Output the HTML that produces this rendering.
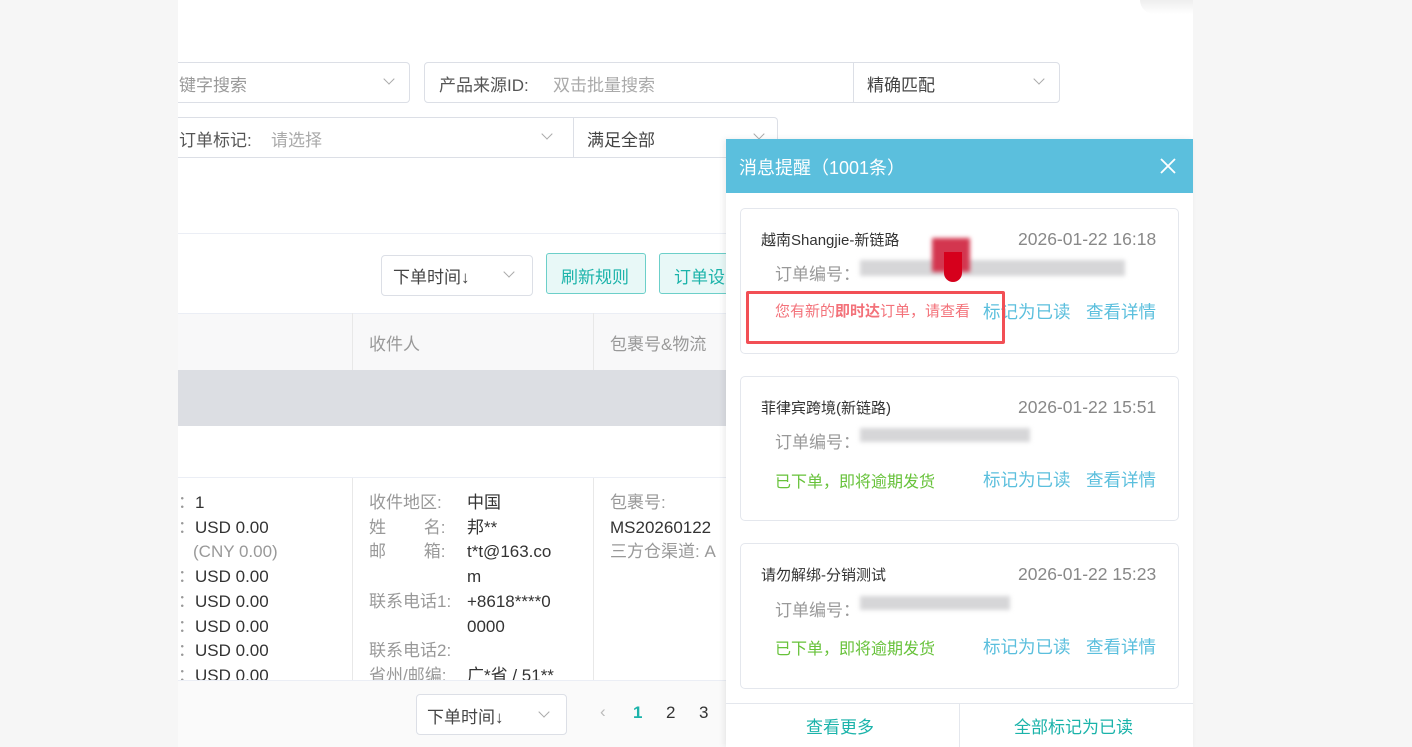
<!DOCTYPE html>
<html><head><meta charset="utf-8"><style>
*{margin:0;padding:0;box-sizing:border-box}
body{width:1412px;height:747px;background:#f6f6f6;position:relative;overflow:hidden;font-family:"Liberation Sans","Noto Sans CJK SC",sans-serif;font-size:16px;color:#333}
.a{position:absolute;white-space:nowrap}
.box{position:absolute;border:1px solid #dcdfe6;border-radius:4px;background:#fff}
.chev{position:absolute;width:8px;height:8px;border-right:1.3px solid #aaa;border-bottom:1.3px solid #aaa;transform:rotate(45deg)}
.g{color:#999}
.card{position:absolute;left:740px;width:439px;border:1px solid #e4e7ed;border-radius:5px;background:#fff}
.blue{color:#5bbfdd}
.green{color:#67c23a}
.blur{position:absolute;background:#d6d6d8;filter:blur(2px)}
.t{font-size:17px}
</style></head><body>
<div class="a" style="left:178px;top:0;width:1015px;height:747px;background:#fff"></div>
<div class="a" style="left:1140px;top:0;width:53px;height:14px;background:linear-gradient(#eee,#fff);border-radius:0 0 0 20px"></div>

<div class="box" style="left:178px;top:62px;width:232px;height:41px;border-left:none;border-radius:0 4px 4px 0"></div>
<div class="a g t" style="left:179px;top:71px">键字搜索</div>
<div class="chev" style="left:385px;top:75px"></div>
<div class="box" style="left:424px;top:62px;width:636px;height:41px"></div>
<div class="a t" style="left:439px;top:71px;color:#555">产品来源ID:</div>
<div class="a t" style="left:553px;top:71px;color:#aaa">双击批量搜索</div>
<div class="a" style="left:853px;top:63px;width:1px;height:39px;background:#dcdfe6"></div>
<div class="a t" style="left:867px;top:71px;color:#444">精确匹配</div>
<div class="chev" style="left:1035px;top:75px"></div>

<div class="a" style="left:178px;top:117px;width:600px;height:41px;border:1px solid #dcdfe6;border-left:none;border-radius:0 4px 4px 0"></div>
<div class="a t" style="left:179px;top:126px;color:#555">订单标记:</div>
<div class="a t" style="left:271px;top:126px;color:#aaa">请选择</div>
<div class="chev" style="left:543px;top:130px"></div>
<div class="a" style="left:573px;top:118px;width:1px;height:39px;background:#dcdfe6"></div>
<div class="a t" style="left:587px;top:126px;color:#444">满足全部</div>
<div class="chev" style="left:755px;top:130px"></div>

<div class="a" style="left:178px;top:233px;width:1015px;height:1px;background:#ebeef5"></div>
<div class="box" style="left:381px;top:255px;width:152px;height:41px"></div>
<div class="a t" style="left:393px;top:263px;color:#444">下单时间↓</div>
<div class="chev" style="left:505px;top:268px"></div>
<div class="a t" style="left:546px;top:253px;width:100px;height:41px;border:1px solid #6ccfc9;background:#e8f8f7;border-radius:3px;color:#1bb3aa;padding:9px 0 0 14px">刷新规则</div>
<div class="a t" style="left:659px;top:253px;width:100px;height:41px;border:1px solid #6ccfc9;background:#e8f8f7;border-radius:3px;color:#1bb3aa;padding:9px 0 0 14px">订单设置</div>

<div class="a" style="left:178px;top:313px;width:1015px;height:57px;background:#f8f8f9;border-top:1px solid #ebeef5"></div>
<div class="a" style="left:352px;top:313px;width:1px;height:57px;background:#e8e8e8"></div>
<div class="a" style="left:593px;top:313px;width:1px;height:57px;background:#e8e8e8"></div>
<div class="a g t" style="left:369px;top:330px">收件人</div>
<div class="a g t" style="left:610px;top:330px">包裹号&amp;物流</div>
<div class="a" style="left:178px;top:370px;width:1015px;height:56px;background:#dcdee3"></div>
<div class="a" style="left:178px;top:477px;width:1015px;height:1px;background:#ebeef5"></div>
<div class="a" style="left:352px;top:478px;width:1px;height:202px;background:#e8e8e8"></div>
<div class="a" style="left:593px;top:478px;width:1px;height:202px;background:#e8e8e8"></div>
<div class="a t" style="left:178px;top:491px;line-height:24.7px;color:#333">
<span class="g">：</span>1<br><span class="g">：</span>USD 0.00<br><span style="color:#999;padding-left:15px">(CNY 0.00)</span><br><span class="g">：</span>USD 0.00<br><span class="g">：</span>USD 0.00<br><span class="g">：</span>USD 0.00<br><span class="g">：</span>USD 0.00<br><span class="g">：</span>USD 0.00</div>
<div class="a t" style="left:369px;top:491px;line-height:24.7px;color:#999">收件地区:<br>姓&nbsp;&nbsp;&nbsp;&nbsp;&nbsp;&nbsp;&nbsp;&nbsp;名:<br>邮&nbsp;&nbsp;&nbsp;&nbsp;&nbsp;&nbsp;&nbsp;&nbsp;箱:<br><br>联系电话1:<br><br>联系电话2:<br>省州/邮编:</div>
<div class="a t" style="left:467px;top:491px;line-height:24.7px;color:#333">中国<br>邦**<br>t*t@163.co<br>m<br>+8618****0<br>0000<br><br>广*省 / 51**</div>
<div class="a t" style="left:610px;top:491px;line-height:24.7px;color:#999">包裹号:<br><span style="color:#333">MS20260122</span><br>三方仓渠道: A</div>

<div class="a" style="left:178px;top:680px;width:1015px;height:67px;background:#fafafa;border-top:1px solid #ebeef5"></div>
<div class="box" style="left:416px;top:694px;width:151px;height:41px"></div>
<div class="a t" style="left:427px;top:703px;color:#444">下单时间↓</div>
<div class="chev" style="left:540px;top:708px"></div>
<div class="a t" style="left:600px;top:702px;color:#bbb">‹</div>
<div class="a t" style="left:633px;top:703px;color:#1bb3aa;font-weight:bold">1</div>
<div class="a t" style="left:666px;top:703px">2</div>
<div class="a t" style="left:699px;top:703px">3</div>

<!-- panel -->
<div class="a" style="left:726px;top:139px;width:467px;height:608px;background:#fff;box-shadow:-2px 0 6px rgba(0,0,0,.08)"></div>
<div class="a" style="left:726px;top:139px;width:467px;height:54px;background:#5bbfdd"></div>
<div class="a" style="left:739px;top:154px;color:#fff;font-size:18px">消息提醒（1001条）</div>
<svg class="a" style="left:1160px;top:158px" width="16" height="16"><path d="M1 1L15 15M15 1L1 15" stroke="#fff" stroke-width="1.8"/></svg>

<div class="card" style="top:208px;height:146px"></div>
<div class="a" style="left:761px;top:229px;font-size:15px">越南Shangjie-新链路</div>
<div class="a t" style="left:1018px;top:229px;color:#888;font-size:17.5px">2026-01-22 16:18</div>
<div class="a t" style="left:775px;top:260px;color:#999">订单编号：</div>
<div class="blur" style="left:860px;top:260px;width:265px;height:16px"></div>
<div class="a" style="left:932px;top:238px;width:38px;height:34px;background:#d3364f;filter:blur(2px)"></div>
<div class="a" style="left:944px;top:252px;width:18px;height:30px;background:#d6001c;border-radius:0 0 9px 9px"></div>
<div class="a" style="left:775px;top:300px;color:#f3727a;font-size:15px">您有新的<b>即时达</b>订单，请查看</div>
<div class="a blue" style="left:983px;top:299px;font-size:17.5px">标记为已读</div>
<div class="a blue" style="left:1086px;top:299px;font-size:17.5px">查看详情</div>
<div class="a" style="left:746px;top:291px;width:259px;height:53px;border:3px solid #f24f55;border-radius:2px"></div>

<div class="card" style="top:376px;height:145px"></div>
<div class="a" style="left:761px;top:397px;font-size:15px">菲律宾跨境(新链路)</div>
<div class="a" style="left:1018px;top:397px;color:#888;font-size:17.5px">2026-01-22 15:51</div>
<div class="a t" style="left:775px;top:428px;color:#999">订单编号：</div>
<div class="blur" style="left:860px;top:428px;width:170px;height:14px"></div>
<div class="a green" style="left:775px;top:468px;font-size:16px">已下单，即将逾期发货</div>
<div class="a blue" style="left:983px;top:467px;font-size:17.5px">标记为已读</div>
<div class="a blue" style="left:1086px;top:467px;font-size:17.5px">查看详情</div>

<div class="card" style="top:543px;height:146px"></div>
<div class="a" style="left:761px;top:564px;font-size:15px">请勿解绑-分销测试</div>
<div class="a" style="left:1018px;top:564px;color:#888;font-size:17.5px">2026-01-22 15:23</div>
<div class="a t" style="left:775px;top:596px;color:#999">订单编号：</div>
<div class="blur" style="left:860px;top:596px;width:150px;height:14px"></div>
<div class="a green" style="left:775px;top:635px;font-size:16px">已下单，即将逾期发货</div>
<div class="a blue" style="left:983px;top:634px;font-size:17.5px">标记为已读</div>
<div class="a blue" style="left:1086px;top:634px;font-size:17.5px">查看详情</div>

<div class="a" style="left:726px;top:703px;width:467px;height:1px;background:#e4e7ed"></div>
<div class="a" style="left:959px;top:704px;width:1px;height:43px;background:#e4e7ed"></div>
<div class="a t" style="left:806px;top:713px;color:#1bb3aa">查看更多</div>
<div class="a t" style="left:1014px;top:713px;color:#1bb3aa">全部标记为已读</div>
</body></html>
